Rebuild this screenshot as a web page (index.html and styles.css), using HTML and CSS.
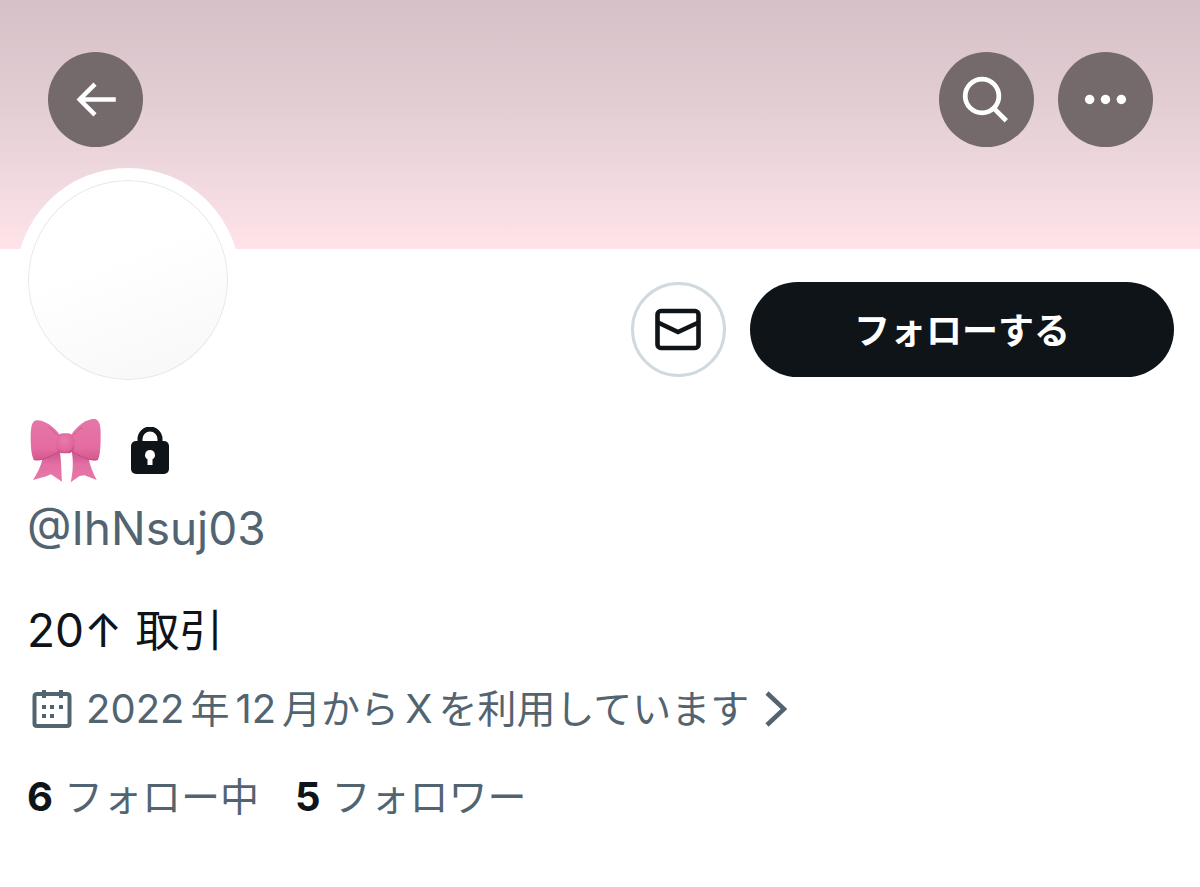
FILE: index.html
```
<!DOCTYPE html>
<html lang="ja">
  <head>
    <meta charset="UTF-8" />
    <meta name="viewport" content="width=device-width, initial-scale=1.0" />
    <title>🎀 (@IhNsuj03) / X</title>
    <link rel="stylesheet" href="styles.css">
  </head>
  <body>
    <header class="banner">
      <button class="round-btn" type="button" aria-label="戻る">
        <svg viewBox="0 0 96 96" fill="none" stroke="#fff" stroke-width="4.5">
          <path d="M68.500 48H32M47.500 32.500L32 48l15.500 15.500" />
        </svg>
      </button>
      <div class="banner-right">
        <button class="round-btn" type="button" aria-label="検索">
          <svg viewBox="0 0 96 96" fill="none" stroke="#fff" stroke-width="4.800">
            <circle cx="43.500" cy="44.500" r="17" />
            <path d="M55.500 57L68 69.500" />
          </svg>
        </button>
        <button class="round-btn" type="button" aria-label="もっと見る">
          <svg viewBox="0 0 96 96" fill="#fff">
            <circle cx="32" cy="48" r="4.800" />
            <circle cx="48" cy="48" r="4.800" />
            <circle cx="64" cy="48" r="4.800" />
          </svg>
        </button>
      </div>
    </header>

    <main class="profile">
      <div class="profile-top">
        <div class="avatar"></div>
        <div class="actions">
          <button class="mail-btn" type="button" aria-label="メッセージ">
            <svg viewBox="0 0 48 48" fill="none" stroke="#0f1419" stroke-width="4.600">
              <rect x="3.500" y="5" width="41" height="37" rx="3.500" />
              <path d="M4 16.500l20 9.500 20.500-9.500" />
            </svg>
          </button>
          <button class="follow-btn" type="button">フォローする</button>
        </div>
      </div>

      <h1 class="name">
        <svg class="bow" viewBox="33 40 216 198" role="img" aria-label="リボン">
          <defs>
            <linearGradient id="loop" x1="0" y1="0" x2="0" y2="1">
              <stop offset="0" stop-color="#e676a8" />
              <stop offset="0.700" stop-color="#e46ca1" />
              <stop offset="1" stop-color="#d2588d" />
            </linearGradient>
            <linearGradient id="tail" x1="0" y1="0" x2="0" y2="1">
              <stop offset="0" stop-color="#c9528a" />
              <stop offset="0.450" stop-color="#e36fa3" />
              <stop offset="1" stop-color="#e878aa" />
            </linearGradient>
            <radialGradient id="knot" cx="0.450" cy="0.350" r="0.750">
              <stop offset="0" stop-color="#e97bac" />
              <stop offset="0.700" stop-color="#e0659c" />
              <stop offset="1" stop-color="#b9457b" />
            </radialGradient>
          </defs>
          <path fill="url(#tail)" d="M72 158C66 185 54 208 42 226L82 215 96 209 129 231C127 200 127 165 122 138z" />
          <path fill="url(#tail)" d="M208 158C213 185 222 205 233 226L196 212 182 214 155 233C163 200 163 165 158 138z" />
          <path fill="url(#loop)" d="M124 92C104 66 76 46 54 47 40 48 36 62 35 90 35 120 36 148 43 162 49 173 97 160 124 138z" />
          <path fill="url(#loop)" d="M156 92C174 62 204 42 226 43 240 44 245 60 245 88 245 118 244 148 238 162 231 174 182 160 156 138z" />
          <path fill="none" stroke="#bd4a7f" stroke-width="3" stroke-linecap="round" d="M45 165C62 171 99 157 122 137M236 165C218 171 180 156 158 137" />
          <path fill="none" stroke="#cf5c91" stroke-width="3" stroke-linecap="round" d="M112 90C104 80 98 74 90 69M166 90C174 80 180 74 188 69" />
          <rect fill="url(#knot)" x="112" y="86" width="54" height="60" rx="20" />
        </svg>
        <svg class="lock" viewBox="0 0 40 48" role="img" aria-label="非公開アカウント">
          <path fill="none" stroke="#0f1419" stroke-width="5" d="M10 17V12a10 10 0 0 1 20 0v5" />
          <rect fill="#0f1419" x="1" y="14" width="38" height="33" rx="5" />
          <path fill="#fff" d="M20 23a5 5 0 0 0-2.500 9.300V38h5v-5.700A5 5 0 0 0 20 23z" />
        </svg>
      </h1>
      <p class="handle">@IhNsuj03</p>
      <p class="bio">20↑ <span class="bio-ja">取引</span></p>

      <a class="joined" href="#">
        <svg class="calendar" viewBox="0 0 40 40">
          <path fill="none" stroke="#536471" stroke-width="4" d="M5 5h30q2.500 0 2.500 2.500v27q0 2.500-2.500 2.500H5q-2.500 0-2.500-2.500v-27Q2.500 5 5 5zM12 1v8M29 1v8" />
          <path fill="#536471" d="M10 16h4v4h-4zM18 16h4v4h-4zM27 16h4v4h-4zM10 25h4v4h-4zM18 25h4v4h-4z" />
        </svg>
        <span class="joined-text"><span class="latin">2022</span>年<span class="latin">12</span>月から<span class="latin">X</span>を利用しています</span>
        <svg class="chevron" viewBox="0 0 22 40" fill="none" stroke="#536471" stroke-width="4.500">
          <path d="M2 4l17 16L2 36" />
        </svg>
      </a>

      <nav class="counts">
        <a href="#"><b>6</b> フォロー中</a>
        <a href="#"><b>5</b> フォロワー</a>
      </nav>
    </main>
  </body>
</html>
```

FILE: styles.css
```
* {
  box-sizing: border-box;
}
body {
  margin: 0;
  background: #fff;
  color: #0f1419;
  font-family: Inter, "Noto Sans CJK JP", sans-serif;
}
button {
  padding: 0;
  border: none;
  font-family: inherit;
  cursor: pointer;
}
a {
  color: #536471;
  text-decoration: none;
}
svg {
  display: block;
}
.banner {
  display: flex;
  justify-content: space-between;
  padding: 52px 47px 102px 48px;
  background: linear-gradient(#d5c1c7, #dfcbd0 35%, #edd7dd 66%, #ffe3e8);
}
.banner-right {
  display: flex;
  gap: 24px;
}
.round-btn {
  width: 95px;
  height: 95px;
  border-radius: 50%;
  background: #746a6c;
}
.profile {
  padding: 0 26px 64px 27px;
}
.profile-top {
  display: flex;
  justify-content: space-between;
  align-items: flex-end;
  margin: -81px 0 26px -11px;
}
.avatar {
  width: 224px;
  height: 224px;
  border: 12px solid #fff;
  border-radius: 50%;
  background: linear-gradient(160deg, #fff 40%, #f7f7f7);
  box-shadow: inset 0 0 0 1px #e4e6e8;
}
.actions {
  display: flex;
  gap: 24px;
  padding-bottom: 15px;
}
.mail-btn {
  display: flex;
  align-items: center;
  justify-content: center;
  width: 95px;
  height: 95px;
  border: 3px solid #cfd9de;
  border-radius: 50%;
  background: #fff;
}
.mail-btn svg {
  width: 48px;
  height: 48px;
}
.follow-btn {
  height: 95px;
  padding: 0 104px 4px;
  border-radius: 48px;
  background: #0f1419;
  color: #fff;
  font-size: 36px;
  font-weight: 700;
}
.name {
  display: flex;
  align-items: center;
  gap: 28px;
  margin: 0 0 16px 3px;
}
.bow {
  width: 72px;
  height: 66px;
}
.lock {
  width: 40px;
  height: 48px;
}
.handle,
.bio {
  margin: 0;
  font-size: 46px;
  line-height: 56px;
}
.handle {
  margin-bottom: 46px;
  color: #536471;
}
.bio-ja {
  font-size: 44px;
}
.joined {
  display: flex;
  align-items: center;
  margin: 22px 0 32px 5px;
  line-height: 56px;
}
.joined-text {
  font-size: 39px;
}
.latin {
  margin: 0 6px;
  font-size: 40px;
}
.latin:first-child {
  margin-left: 0;
}
.calendar {
  width: 40px;
  height: 40px;
  margin-right: 14px;
}
.chevron {
  width: 22px;
  height: 40px;
  margin-left: 16px;
}
.counts {
  display: flex;
  gap: 36px;
  font-size: 39px;
  line-height: 56px;
}
.counts b {
  color: #0f1419;
  font-size: 40px;
}
```
